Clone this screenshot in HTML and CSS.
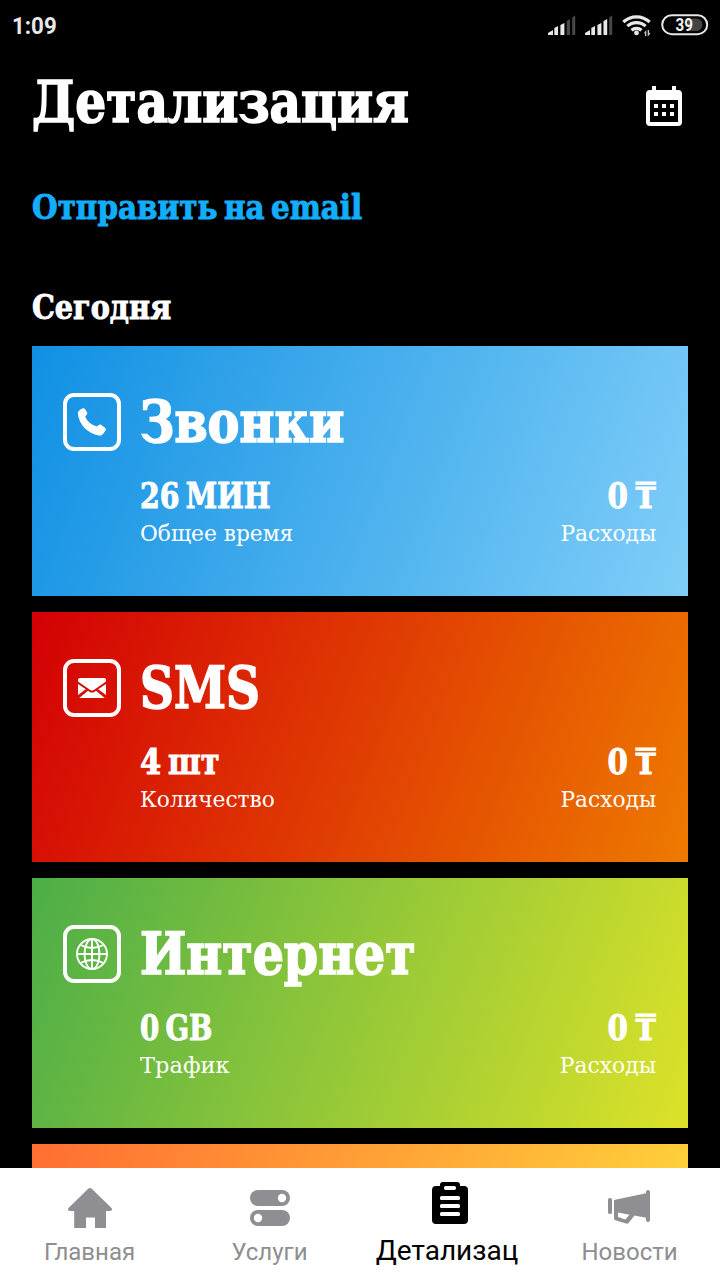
FILE: index.html
```html
<!DOCTYPE html>
<html lang="ru">
<head>
<meta charset="utf-8">
<title>Детализация</title>
<link rel="stylesheet" href="styles.css">
</head>
<body>
<div class="app">
  <header class="status">
    <span class="clock">1:09</span>
    <div class="status-icons">
      <svg class="signal" width="28" height="22" viewBox="0 0 28 22"><g fill="#e8e8e8"><path d="M0 21v-2l5-3v5zM6.300 21v-7l3.700-2v9zM12.400 21V11l4-2v12z"/></g><g fill="#484848"><path d="M18.700 21V7l3.300-2v16zM24.200 21V3.500l3-2V21z"/></g></svg>
      <svg class="signal" width="28" height="22" viewBox="0 0 28 22"><g fill="#e8e8e8"><path d="M0 21v-2l5-3v5zM6.300 21v-7l3.700-2v9zM12.400 21V11l4-2v12zM18.500 21V7l3.700-2v16z"/></g><path fill="#484848" d="M24.200 21V3.500l3-2V21z"/></svg>
      <svg class="wifi" width="30" height="24" viewBox="0 0 30 24"><g fill="none" stroke="#e8e8e8" stroke-width="3.200"><path d="M1.300 8a19.500 19.500 0 0 1 26.400 0"/><path d="M5.400 12.200a13.300 13.300 0 0 1 18.200 0"/><path d="M9.500 16.200a7.500 7.500 0 0 1 10 0"/></g><circle cx="14.500" cy="18.900" r="2.400" fill="#e8e8e8"/><path fill="#c8c8c8" d="M24.300 22h-1.300v-2.500l-1.200-.2 2.500-3.300zM25.700 16H27v2.800l1.600.2-2.900 3.800z"/></svg>
      <svg class="battery" width="48" height="22" viewBox="0 0 48 22"><rect x="1.200" y="1.200" width="45" height="19" rx="9.500" fill="none" stroke="#e8e8e8" stroke-width="2"/><path fill="#444" d="M27 4.500h9a6.300 6.300 0 0 1 0 12.500h-9z"/><text class="charge" x="14.500" y="17" textLength="17.500" lengthAdjust="spacingAndGlyphs">39</text></svg>
    </div>
  </header>

  <main class="content">
    <div class="heading">
      <h1 class="display title">Детализация</h1>
      <svg width="36" height="40" viewBox="0 0 36 40"><path fill="#fff" fill-rule="evenodd" d="M6 0h4v4h16V0h4v4h2a4 4 0 0 1 4 4v28a4 4 0 0 1-4 4H4a4 4 0 0 1-4-4V8a4 4 0 0 1 4-4h2zM4 14v22h28V14z"/><path fill="#fff" d="M8 18h4v4H8zM16 18h4v4h-4zM24 18h4v4h-4zM8 26h4v4H8zM16 26h4v4h-4zM24 26h4v4h-4z"/></svg>
    </div>
    <a class="strong send">Отправить на email</a>
    <h2 class="strong today">Сегодня</h2>

    <section class="cards">
      <article class="card calls">
        <svg class="icon" width="58" height="58" viewBox="0 0 58 58"><rect class="frame" x="2" y="2" width="54" height="54" rx="9"/><path fill="#fff" d="M19 15.600Q20.800 14.500 22 16l2.200 3.400Q24.600 20.500 23.800 21.500l-1.600 2.200Q25 30.500 33.800 33.600l2.400-1.900Q37 31.200 38 31.700l4.300 3.400Q43.500 36.200 42.600 37.500L39.800 41.200Q38.500 43 36 42.600C24.500 40.500 15.800 31.500 14.900 20.500Q14.800 18.500 16.200 17.400z"/></svg>
        <div class="body">
          <h3 class="display name">Звонки</h3>
          <div class="row"><span class="strong value">26 МИН</span><span class="strong value cost">0 ₸</span></div>
          <div class="row"><span class="label">Общее время</span><span class="label spend">Расходы</span></div>
        </div>
      </article>
      <article class="card sms">
        <svg class="icon" width="58" height="58" viewBox="0 0 58 58"><rect class="frame" x="2" y="2" width="54" height="54" rx="9"/><path fill="#fff" d="M17 19h24q2 0 2 2v1.500L31.500 30.500Q29 32.500 26.500 30.500L15 22.500V21q0-2 2-2zM15 25l7.800 5.300L15 36zM43 25v11l-7.800-5.700zM16.300 39l8.700-7.200 1.300.9q2.700 1.800 5.400 0l1.300-.9L41.700 39z"/></svg>
        <div class="body">
          <h3 class="display name">SMS</h3>
          <div class="row"><span class="strong value">4 шт</span><span class="strong value cost">0 ₸</span></div>
          <div class="row"><span class="label">Количество</span><span class="label spend">Расходы</span></div>
        </div>
      </article>
      <article class="card internet">
        <svg class="icon" width="58" height="58" viewBox="0 0 58 58"><rect class="frame" x="2" y="2" width="54" height="54" rx="9"/><g fill="none" stroke="#fff" stroke-width="1.900"><circle cx="29" cy="29" r="15"/><ellipse cx="29" cy="29" rx="7.500" ry="15"/><path d="M29 14v30M14 29h30M17.500 20q11.500 6 23 0M17.500 38q11.500-6 23 0"/></g></svg>
        <div class="body">
          <h3 class="display name">Интернет</h3>
          <div class="row"><span class="strong value">0 GB</span><span class="strong value cost">0 ₸</span></div>
          <div class="row"><span class="label">Трафик</span><span class="label spend">Расходы</span></div>
        </div>
      </article>
      <article class="card other"></article>
    </section>
  </main>

  <nav class="tabs">
    <a class="tab"><svg width="48" height="48" viewBox="0 0 48 48"><path fill="#8e8e93" d="M22.500 8.600q1.500-1.300 3 0l20 19.400q1.300 1.400 0 2.600-.6.400-1.500.4h-4v17H29V37.500h-9V48H8.200V31H4q-.9 0-1.500-.4-1.300-1.200 0-2.600z"/></svg><span>Главная</span></a>
    <a class="tab"><svg width="48" height="48" viewBox="0 0 48 48"><rect x="4" y="10" width="40" height="16" rx="8" fill="#8e8e93"/><rect x="4" y="30" width="40" height="16" rx="8" fill="#8e8e93"/><circle cx="36" cy="18" r="4.200" fill="#fff"/><circle cx="12" cy="38" r="4.200" fill="#fff"/></svg><span>Услуги</span></a>
    <a class="tab active"><svg width="48" height="48" viewBox="0 0 48 48"><path d="M10 6h4V5q0-3 3-3h14q3 0 3 3v1h4q4 0 4 4v30q0 4-4 4H10q-4 0-4-4V10q0-4 4-4z"/><g fill="#fff"><rect x="18" y="6" width="12" height="4" rx="1.700"/><rect x="14" y="16" width="20" height="4" rx="1.500"/><rect x="14" y="24" width="20" height="4" rx="1.500"/><rect x="14" y="32" width="20" height="4" rx="1.500"/></g></svg><span>Детализац</span></a>
    <a class="tab"><svg width="48" height="48" viewBox="0 0 48 48"><g fill="#8e8e93"><rect x="2" y="18" width="4" height="16" rx="1.800"/><path fill-rule="evenodd" d="M8 20l32-6.700V12q0-2 2-2t2 2v28q0 2-2 2t-2-2v-2.300l-11.500-2.200-5.600 7q-1 1.500-2.700 1.100L9.300 40.300Q8 39.700 8 38zM12 32.500V37l7.300 2.500 4.200-4.800z"/></g></svg><span>Новости</span></a>
  </nav>
</div>
</body>
</html>
```
FILE: styles.css
```css
* { box-sizing: border-box; }
body { margin: 0; background: #000; font-family: Roboto, sans-serif; }
h1, h2, h3 { margin: 0; }
svg { display: block; flex: none; }

.app { width: 720px; height: 1280px; display: flex; flex-direction: column; overflow: hidden; background: #000; color: #fff; }

.status { flex: none; height: 50px; padding: 13px 11px 0 12px; display: flex; justify-content: space-between; align-items: flex-start; }
.clock { margin-top: 1px; font-size: 23px; font-weight: 700; line-height: 26px; color: #e8e8e8; transform: scaleX(.97); transform-origin: left; }
.status-icons { display: flex; align-items: flex-start; }
.signal { margin: 1px 9px 0 0; }
.wifi { margin: 1px 9px 0 0; }
.battery { margin: 1px 0 0 0; }
.charge { font: 700 18px Roboto, sans-serif; fill: #f2f2f2; }

.content { flex: 1; min-height: 0; padding: 22px 32px 0; overflow: hidden; display: flex; flex-direction: column; align-items: stretch; }
.heading { display: flex; justify-content: space-between; align-items: center; height: 60px; padding-right: 6px; }
.heading svg { margin-top: 8px; }

.display, .strong { display: block; font-family: "DejaVu Serif Condensed", "DejaVu Serif", serif; font-weight: 700; transform-origin: left; white-space: nowrap; }
.display { font-size: 58px; line-height: 62px; -webkit-text-stroke: 1.6px currentColor; }
.strong { font-size: 34px; line-height: 40px; word-spacing: -4px; -webkit-text-stroke: .9px currentColor; }
.title { transform: scaleX(.933); }
.send { margin-top: 55px; color: #12adfb; transform: scaleX(.962); }
.today { margin-top: 60px; transform: scaleX(.938); }

.cards { margin-top: 19px; display: flex; flex-direction: column; gap: 16px; }
.card { flex: none; height: 250px; padding: 45px 32px 0 31px; display: flex; gap: 19px; }
.calls { background: linear-gradient(110.9deg, #1090e3, #80cef8); }
.sms { background: linear-gradient(110.9deg, #d30005, #ee7a00); }
.internet { background: linear-gradient(110.9deg, #4cae48, #dde228); }
.other { background: linear-gradient(110.9deg, #ff6e32, #ffdc3b); }

.icon { margin-top: 2px; }
.frame { fill: none; stroke: #fff; stroke-width: 4; }
.body { flex: 1; }
.name { margin-bottom: 23px; }
.row { display: flex; justify-content: space-between; }
.value { font-size: 35px; }
.label { font: 23px "DejaVu Serif Condensed", "DejaVu Serif", serif; line-height: 30px; margin-top: 2px; transform-origin: left; transform: scaleX(1.05); }
.row .cost, .row .spend { transform-origin: right; }

.calls .name { transform: scaleX(.915); }
.sms .name { transform: scaleX(.9); }
.internet .name { transform: scaleX(.94); }
.calls .value { transform: scaleX(.9); }
.sms .value { transform: scaleX(.97); }
.internet .value { transform: scaleX(.88); }
.internet .label { transform: scaleX(1.09); }
.internet .spend { transform: scaleX(1.058); }
.card .cost { word-spacing: -3px; transform: scaleX(.93); }

.tabs { flex: none; height: 112px; display: grid; grid-template-columns: repeat(4, 1fr); background: #fff; }
.tab { display: flex; flex-direction: column; align-items: center; gap: 10px; padding-top: 12px; font-size: 24px; line-height: 28px; color: #8e8e90; }
.tab span { margin-right: 1px; }
.active { gap: 9px; font-size: 28px; color: #000; }
.active span { margin-right: 6px; }
```
